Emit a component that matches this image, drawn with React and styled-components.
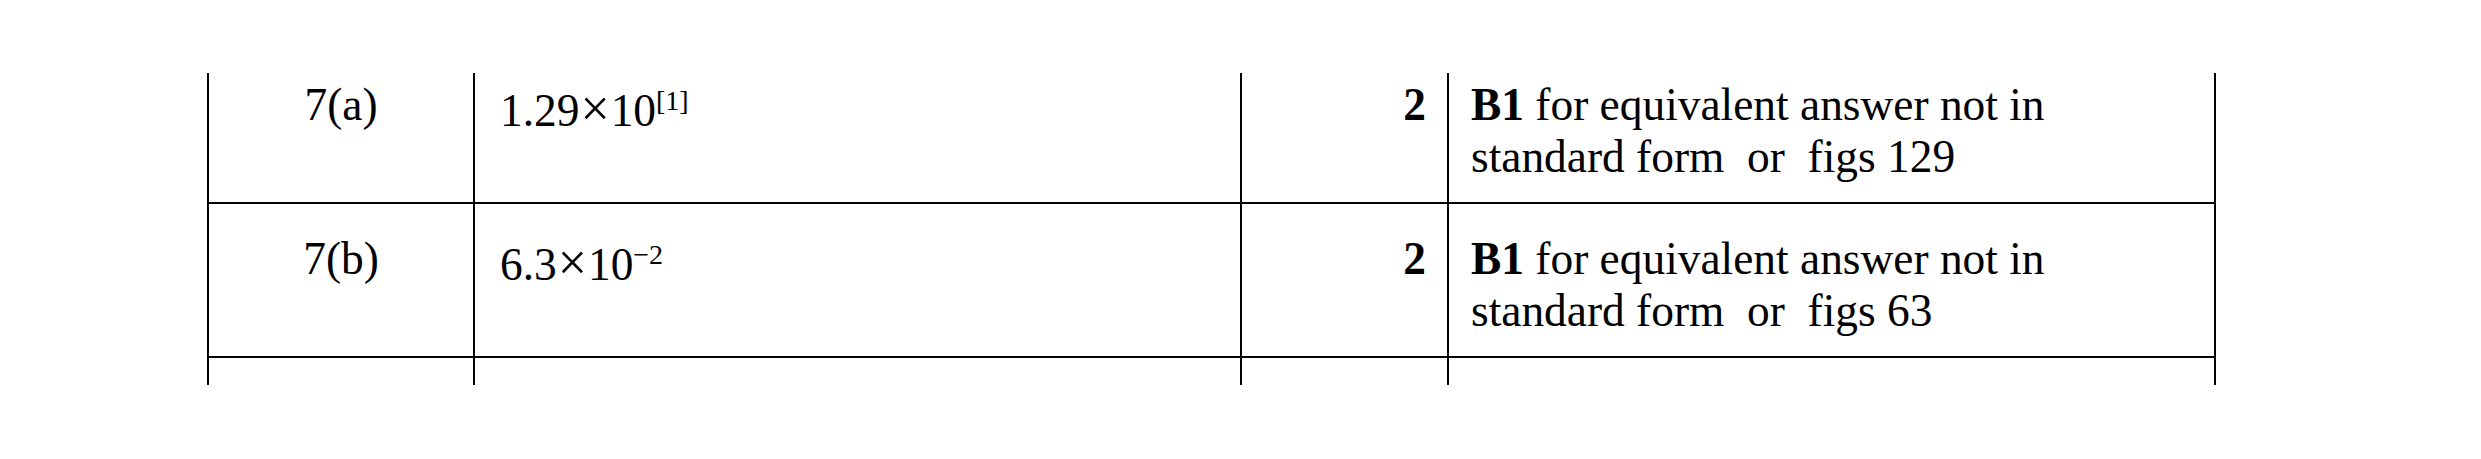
import React from 'react';
import styled, { createGlobalStyle } from 'styled-components';

const GlobalStyle = createGlobalStyle`
  html, body {
    margin: 0;
    padding: 0;
    background: #fff;
  }
  body {
    font-family: "Liberation Serif", "Times New Roman", serif;
    color: #000;
  }
`;

const Page = styled.div`
  width: 2481px;
  height: 459px;
  padding: 73px 0 0 207px;
  box-sizing: border-box;
  overflow: hidden;
`;

// the table is a slice of a longer mark scheme: the first row is cut at the top
const Viewport = styled.div`
  overflow: hidden;
`;

const Table = styled.table`
  margin-top: -23px;
  border-collapse: separate;
  border-spacing: 0;
  table-layout: fixed;
  width: 2008px;
  border-left: 2px solid #000;
  font-size: 45.4px;
  line-height: 52px;
`;

const Cell = styled.td`
  box-sizing: border-box;
  padding: ${(p) => (p.$empty ? 0 : 29 + (p.$padTop || 0))}px 0 0;
  padding-left: ${(p) => p.$padLeft || 0}px;
  padding-right: ${(p) => p.$padRight || 0}px;
  border-right: 2px solid #000;
  border-bottom: ${(p) => (p.$empty ? 'none' : '2px solid #000')};
  vertical-align: top;
  text-align: ${(p) => p.$align || 'left'};
  font-weight: ${(p) => (p.$bold ? 700 : 400)};
  height: ${(p) => (p.$empty ? 27 : 154)}px;
`;

const Times = styled.span`
  font-size: 1.14em;
  line-height: 0;
  margin: 0 1px;
`;

const Sup = styled.sup`
  font-size: 28px;
  line-height: 0;
  vertical-align: 16px;
`;

const Bold = styled.b`
  font-weight: 700;
`;

const rows = [
  { q: '7(a)', mantissa: '1.29', power: '[1]', mark: '2', figs: '129' },
  { q: '7(b)', mantissa: '6.3', power: '−2', mark: '2', figs: '63' },
];

const Row = ({ q, mantissa, power, mark, figs }) => (
  <tr>
    <Cell $align="center">{q}</Cell>
    <Cell $padLeft={25} $padTop={6}>
      {mantissa}
      <Times>×</Times>10<Sup>{power}</Sup>
    </Cell>
    <Cell $align="right" $padRight={21} $bold>
      {mark}
    </Cell>
    <Cell $padLeft={22}>
      <Bold>B1</Bold> for equivalent answer not in
      <br />
      {`standard form\u00a0 or\u00a0 figs ${figs}`}
    </Cell>
  </tr>
);

const App = () => (
  <Page>
    <GlobalStyle />
    <Viewport>
      <Table>
        <colgroup>
          <col style={{ width: 266 }} />
          <col style={{ width: 767 }} />
          <col style={{ width: 207 }} />
          <col style={{ width: 767 }} />
        </colgroup>
        <tbody>
          {rows.map((r) => (
            <Row key={r.q} {...r} />
          ))}
          <tr>
            <Cell $empty />
            <Cell $empty />
            <Cell $empty />
            <Cell $empty />
          </tr>
        </tbody>
      </Table>
    </Viewport>
  </Page>
);

export default App;
